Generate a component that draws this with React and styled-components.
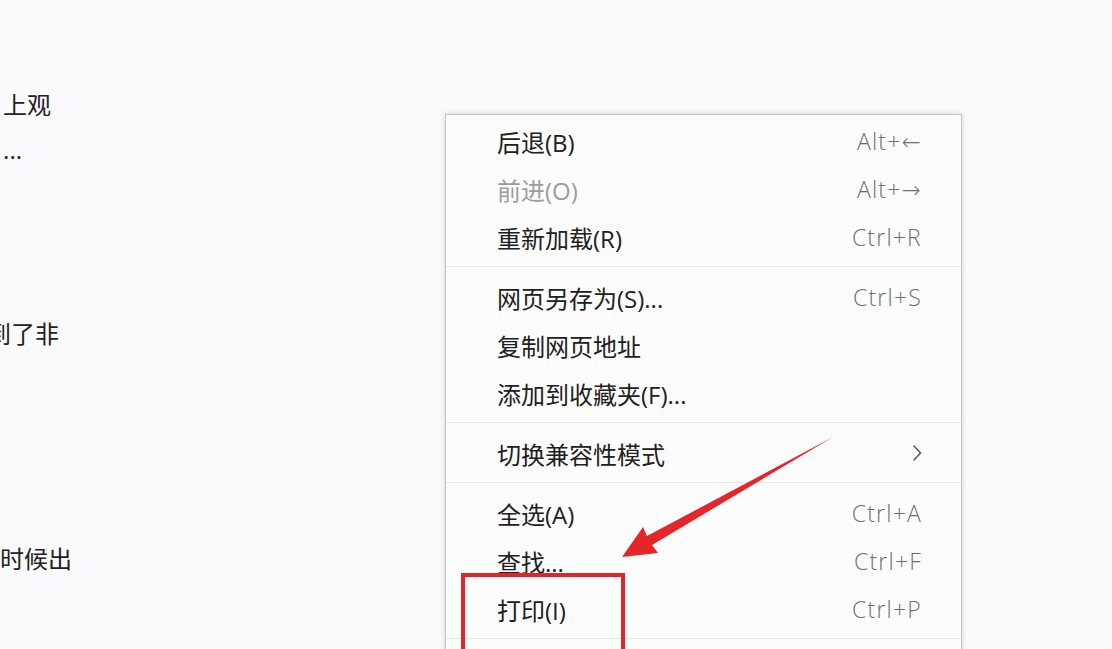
import styled, { createGlobalStyle } from "styled-components";

const GlobalStyle = createGlobalStyle`
  html, body {
    margin: 0;
    padding: 0;
    background: #faf9fb;
  }
  body {
    font-family: "Noto Sans CJK SC", "Noto Sans", sans-serif;
  }
`;

const Page = styled.div`
  position: relative;
  width: 1112px;
  height: 649px;
  overflow: hidden;
  background: #faf9fb;
`;

const Article = styled.div`
  display: flex;
  flex-direction: column;
  padding-top: 80px;
  font-size: 24px;
  color: #222;
`;

const Line = styled.div`
  display: flex;
  justify-content: flex-end;
  align-items: center;
  width: ${(p) => p.$w}px;
  height: 46px;
  margin-top: ${(p) => p.$gap || 0}px;
  overflow: hidden;
  white-space: nowrap;
  font-family: ${(p) => (p.$latin ? '"Open Sans", sans-serif' : '"Noto Sans CJK SC", sans-serif')};
`;

const Menu = styled.div`
  position: absolute;
  left: 445px;
  top: 114px;
  width: 515px;
  padding-top: 2px;
  height: 560px;
  background: #fdfcfd;
  border: 1px solid #c4c4c4;
  box-shadow: 0 0 6px rgba(0, 0, 0, 0.16);
`;

const Item = styled.div`
  display: flex;
  align-items: center;
  justify-content: space-between;
  height: 48px;
  padding: 0 39px 0 51px;
`;

const Label = styled.span`
  font-family: "Open Sans", "Noto Sans CJK SC", sans-serif;
  font-size: 24px;
  color: ${(p) => (p.$disabled ? "#9c9c9c" : "#202020")};
  white-space: nowrap;
`;

const Shortcut = styled.span`
  font-family: "Open Sans", "DejaVu Sans", sans-serif;
  font-size: 23px;
  font-weight: 300;
  letter-spacing: 1.2px;
  color: #707070;
  white-space: nowrap;
`;

const Separator = styled.div`
  height: 1px;
  margin: 5px 0 6px;
  background: #e9e8ea;
`;

const Overlay = styled.svg`
  position: absolute;
  inset: 0;
  pointer-events: none;
`;

const Chevron = () => (
  <svg width="10" height="18" viewBox="0 0 10 18">
    <path d="M1.5 1.5 L8.5 9 L1.5 16.5" fill="none" stroke="#555" strokeWidth="1.5" />
  </svg>
);

const groups = [
  [
    { label: "后退(B)", key: "Alt+←" },
    { label: "前进(O)", key: "Alt+→", disabled: true },
    { label: "重新加载(R)", key: "Ctrl+R" },
  ],
  [
    { label: "网页另存为(S)...", key: "Ctrl+S" },
    { label: "复制网页地址" },
    { label: "添加到收藏夹(F)..." },
  ],
  [{ label: "切换兼容性模式", sub: true }],
  [
    { label: "全选(A)", key: "Ctrl+A" },
    { label: "查找...", key: "Ctrl+F" },
    { label: "打印(I)", key: "Ctrl+P" },
  ],
];

export default function App() {
  return (
    <Page>
      <GlobalStyle />
      <Article>
        <Line $w={51}>上观</Line>
        <Line $w={22} $latin>...</Line>
        <Line $w={59} $gap={137}>到了非</Line>
        <Line $w={72} $gap={179}>时候出</Line>
      </Article>

      <Menu>
        {groups.map((g, gi) => (
          <div key={gi}>
            {g.map((it) => (
              <Item key={it.label}>
                <Label $disabled={it.disabled}>{it.label}</Label>
                {it.key && <Shortcut>{it.key}</Shortcut>}
                {it.sub && <Chevron />}
              </Item>
            ))}
            <Separator />
          </div>
        ))}
      </Menu>

      <Overlay width="1112" height="649" viewBox="0 0 1112 649">
        <polygon
          points="622,557 643,527 647,536 833,437 652,545 658,553"
          fill="#e4262a"
        />
        <rect x="463" y="575" width="160" height="110" fill="none" stroke="#e0262b" strokeWidth="4" />
      </Overlay>
    </Page>
  );
}
